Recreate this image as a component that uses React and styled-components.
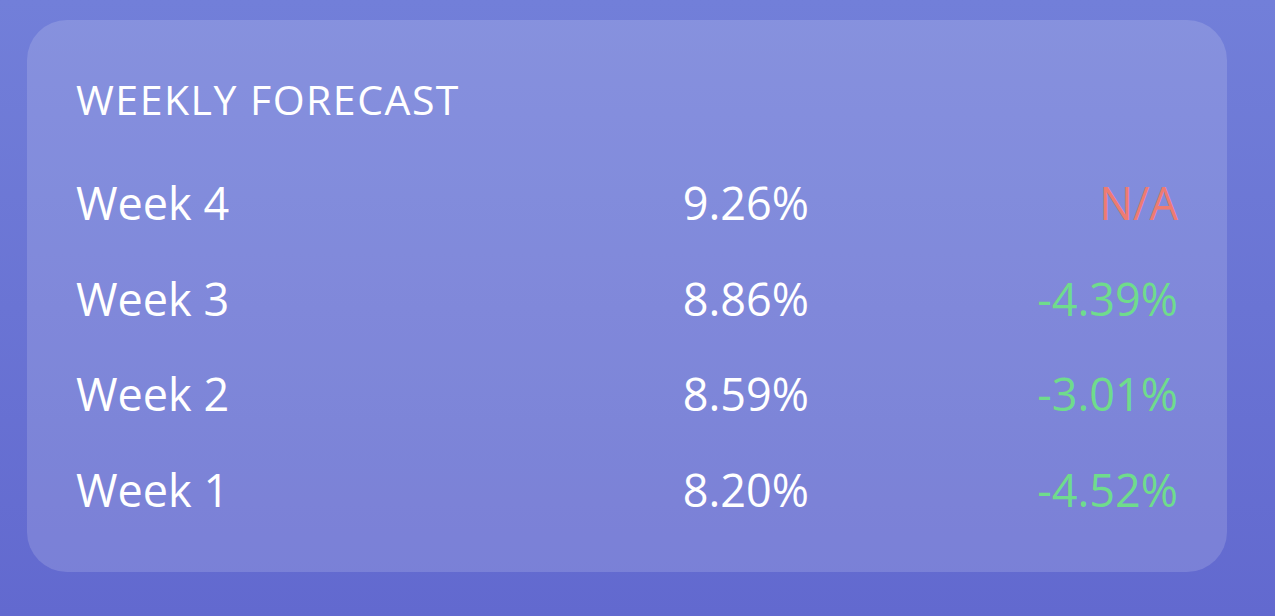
import styled, { createGlobalStyle } from "styled-components";

const GlobalStyle = createGlobalStyle`
  html, body {
    margin: 0;
    padding: 0;
  }
  body {
    min-height: 100vh;
    background: linear-gradient(180deg, #727fd9 0%, #6269cf 100%);
    font-family: "Open Sans", "Noto Sans", sans-serif;
    color: #fff;
  }
`;

const forecast = [
  { week: "Week 4", value: "9.26%", change: "N/A", trend: "none" },
  { week: "Week 3", value: "8.86%", change: "-4.39%", trend: "down" },
  { week: "Week 2", value: "8.59%", change: "-3.01%", trend: "down" },
  { week: "Week 1", value: "8.20%", change: "-4.52%", trend: "down" },
];

export default function App() {
  return (
    <>
      <GlobalStyle />
      <Page>
        <Card>
          <Title>WEEKLY FORECAST</Title>
          <List>
            {forecast.map((row) => (
              <Row key={row.week}>
                <Week>{row.week}</Week>
                <Value>{row.value}</Value>
                <Change $trend={row.trend}>{row.change}</Change>
              </Row>
            ))}
          </List>
        </Card>
      </Page>
    </>
  );
}

const Page = styled.main`
  padding: 20px 48px 44px 27px;
`;

const Card = styled.section`
  background: rgba(255, 255, 255, 0.15);
  border-radius: 40px;
  padding: 57px 49px 35px;
`;

const Title = styled.h2`
  margin: 0 0 34px;
  font-size: 41px;
  font-weight: 400;
  letter-spacing: 1.5px;
  line-height: 44px;
`;

const List = styled.div`
  display: flex;
  flex-direction: column;
`;

const Row = styled.div`
  display: grid;
  grid-template-columns: 1fr auto 369px;
  align-items: center;
  height: 95.5px;
  font-size: 45px;
`;

const Week = styled.span``;

const Value = styled.span`
  text-align: right;
`;

const Change = styled.span`
  text-align: right;
  color: ${({ $trend }) => ($trend === "none" ? "#ee7b72" : "#6fdc8c")};
`;
